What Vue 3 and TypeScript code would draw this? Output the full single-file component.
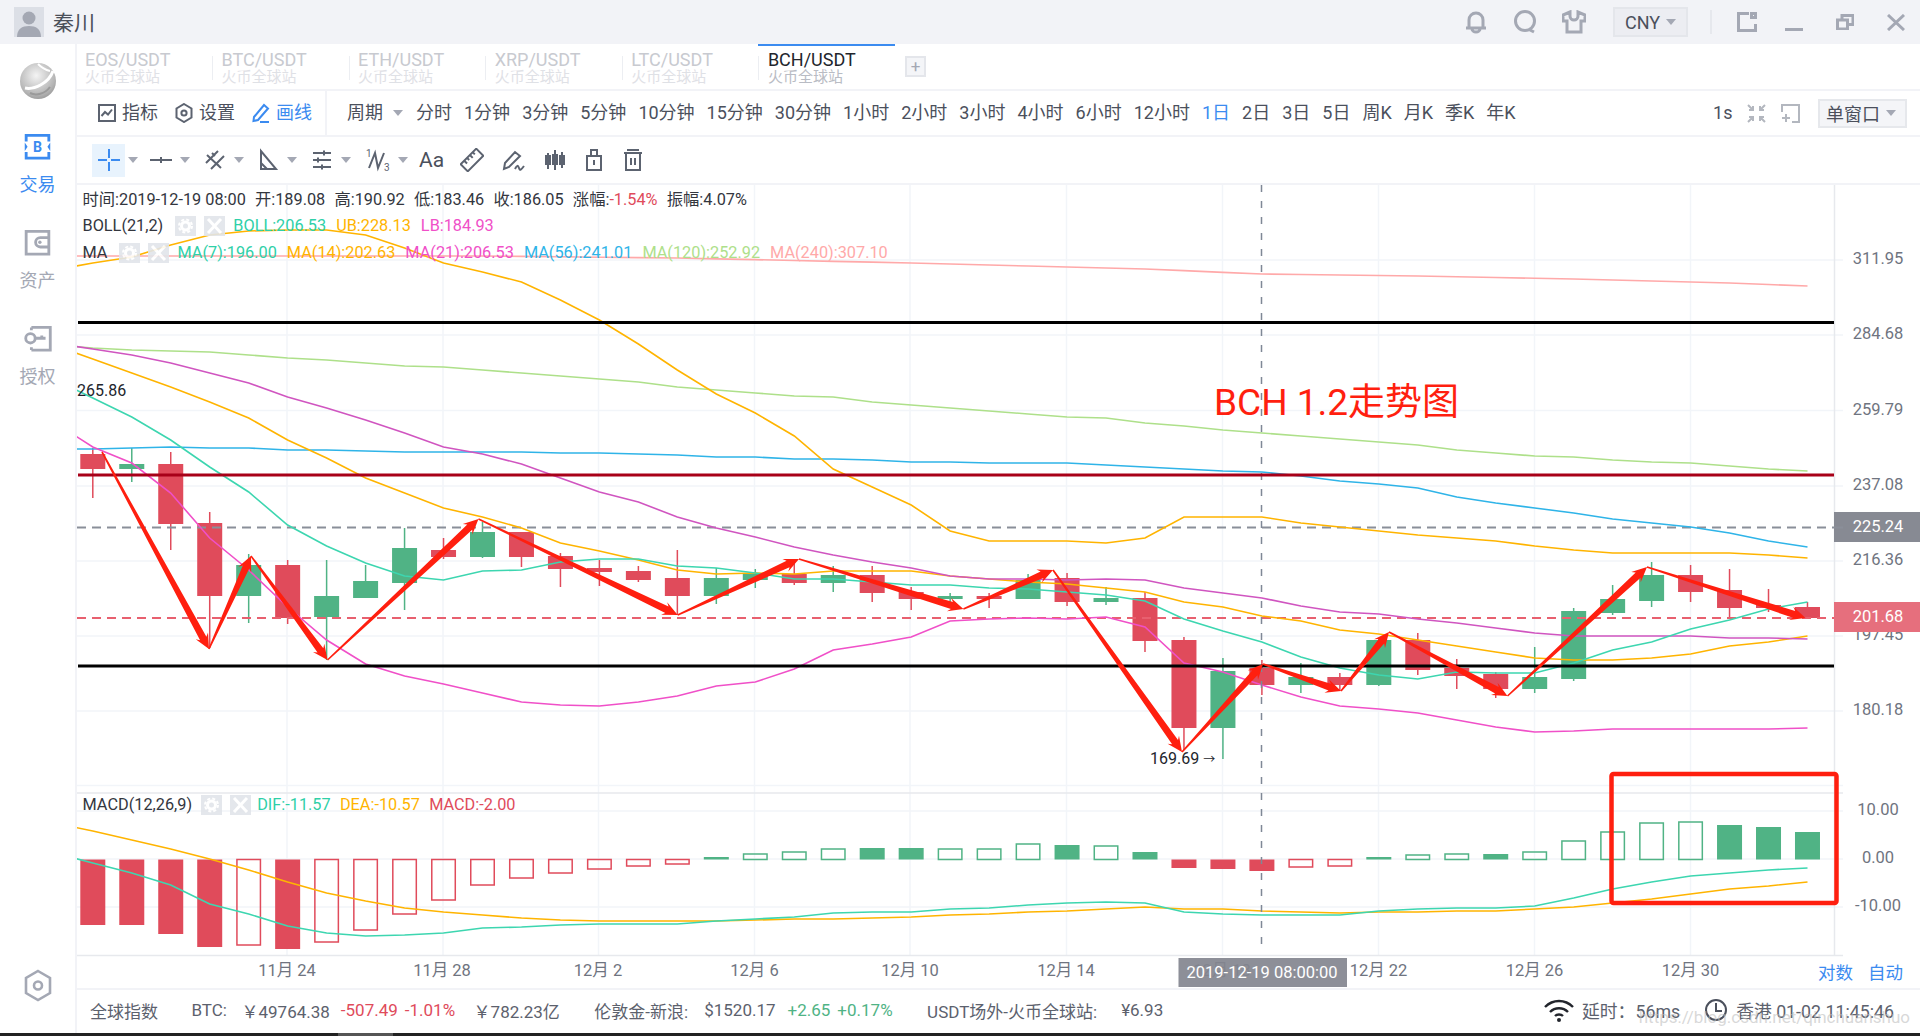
<template>
  <div class="app">
    <div class="titlebar">
      <div class="avatar">
        <svg viewBox="0 0 30 30" width="30" height="30">
          <circle cx="15" cy="11" r="6.5" fill="#a4a8b3" />
          <path d="M3 30c0-8 5-11 12-11s12 3 12 11z" fill="#a4a8b3" />
        </svg>
      </div>
      <span class="username">秦川</span>
      <div class="win-tools">
        <svg class="hi" viewBox="0 0 24 24" width="24" height="24"><path d="M5 18V10a7 7 0 0 1 14 0v8M2 18h20M8 19a4 3 0 0 0 8 0" /></svg>
        <svg class="hi" viewBox="0 0 24 24" width="24" height="24"><circle cx="12" cy="11" r="9.5" /><path d="M17 20l4 2" /></svg>
        <svg class="hi" viewBox="0 0 24 24" width="24" height="24"><path d="M8 2L1 5v6h4v11h14V11h4V5l-7-3v4a4 4 0 0 1-8 0z" /></svg>
        <div class="cny">CNY<i class="caret"></i></div>
        <div class="vsep"></div>
        <svg class="hi panel" viewBox="0 0 20 20" width="20" height="20"><path d="M12 1.500H1.500v17h17V12" /><rect x="14.500" y="1.500" width="4" height="4" /></svg>
        <svg class="hi min" viewBox="0 0 18 20" width="18" height="20"><path d="M0 17.500h18" /></svg>
        <svg class="hi res" viewBox="0 0 18 16" width="18" height="16"><rect x="1.500" y="6" width="10" height="9" /><path d="M6 5V1.500h11v9h-4" /></svg>
        <svg class="hi res" viewBox="0 0 18 17" width="18" height="17"><path d="M1 1l16 15M17 1L1 16" /></svg>
      </div>
    </div>

    <div class="body">
      <aside class="sidebar">
        <svg class="logo" viewBox="0 0 36 36" width="36" height="36">
          <defs>
            <radialGradient id="sphere" cx="0.45" cy="0.35" r="0.75">
              <stop offset="0" stop-color="#f4f4f4" />
              <stop offset="0.7" stop-color="#b5b5b5" />
              <stop offset="1" stop-color="#8d8d8d" />
            </radialGradient>
          </defs>
          <ellipse cx="18" cy="18" rx="18" ry="18" fill="url(#sphere)" />
          <path d="M5 25C14 27 29 20 33 8" fill="none" stroke="#fff" stroke-width="3" />
          <path d="M18 1c3 3 8 6 12 7" fill="none" stroke="#fff" stroke-width="2" />
          <path d="M10 30c6 3 15 1 20-6" fill="none" stroke="#9a9a9a" stroke-width="2" />
        </svg>
        <div class="side-item active">
          <svg viewBox="0 0 27 27" width="27" height="27">
            <path d="M1.500 8V1.500h24V8M25.500 19v6.500h-24V19" fill="none" stroke="#3b8bf0" stroke-width="3" />
            <path d="M0 9l3 4.500L0 18zM27 9l-3 4.500 3 4.500z" fill="#3b8bf0" />
            <text x="13.500" y="19" class="b-letter">B</text>
          </svg>
          <span>交易</span>
        </div>
        <div class="side-item">
          <svg viewBox="0 0 27 27" width="27" height="27">
            <path d="M1.500 1.500h24v24h-24zM25.500 8h-9a5 5 0 0 0 0 10h9" fill="none" stroke="#a4a8b4" stroke-width="3" />
            <circle cx="16" cy="13" r="1.800" fill="#a4a8b4" />
          </svg>
          <span>资产</span>
        </div>
        <div class="side-item">
          <svg viewBox="0 0 30 27" width="30" height="27">
            <path d="M8 1.500h20v24H8M8 1.500v3M8 22.500v3" fill="none" stroke="#a4a8b4" stroke-width="3" />
            <circle cx="7" cy="13" r="5" fill="#fff" stroke="#a4a8b4" stroke-width="3" />
            <path d="M12 13h11M19 10v3" fill="none" stroke="#a4a8b4" stroke-width="3" />
          </svg>
          <span>授权</span>
        </div>
        <svg class="side-gear" viewBox="0 0 28 33" width="28" height="33">
          <path d="M14 2l12 7v15l-12 7-12-7V9z" fill="none" stroke="#a4a8b4" stroke-width="2.600" />
          <circle cx="14" cy="16.500" r="4" fill="none" stroke="#a4a8b4" stroke-width="2.600" />
        </svg>
      </aside>

      <main class="main">
        <div class="tabs">
          <div v-for="t in tabs" :key="t" class="tab" :class="{ on: t === 'BCH/USDT' }">
            <div class="sym">{{ t }}</div>
            <div class="src">火币全球站</div>
          </div>
          <div class="add-tab">+</div>
        </div>

        <div class="bar1">
          <div class="bar1-left">
            <svg class="ti big" viewBox="0 0 18 18" width="18" height="18"><path d="M1 1h16v16H1zM3.500 12l3.500-4 3 2.500 4-5" /></svg>
            <span class="lbl">指标</span>
            <svg class="ti big gap-l" viewBox="0 0 18 20" width="18" height="20"><path d="M9 1l7.500 4.500v9L9 19l-7.500-4.500v-9z" /><circle cx="9" cy="10" r="2.600" /></svg>
            <span class="lbl">设置</span>
            <svg class="ti big gap-l blue" viewBox="0 0 18 20" width="18" height="20"><path d="M2 14L12 2l4 3.500L6 17l-4.500 1zM8 19h9" /></svg>
            <span class="lbl blue-t">画线</span>
          </div>
          <div class="bar1-right">
            <span class="lbl period">周期<i class="caret"></i></span>
            <span v-for="p in periods" :key="p" class="lbl" :class="{ 'blue-t': p === '1日' }">{{ p }}</span>
            <div class="bar1-end">
              <span class="lbl">1s</span>
              <svg class="ti thin" viewBox="0 0 19 19" width="19" height="19"><path d="M1 1l5 5M6 2v4H2M18 1l-5 5M13 2v4h4M1 18l5-5M6 17v-4H2M18 18l-5-5M13 17v-4h4" /></svg>
              <svg class="ti thin" viewBox="0 0 19 19" width="19" height="19"><path d="M1 8V1h17v17h-7M1 14h8M5 10v8" /></svg>
              <div class="single">单窗口<i class="caret"></i></div>
            </div>
          </div>
        </div>

        <div class="bar2">
          <span class="tool-sel">
            <svg class="ti2" viewBox="0 0 24 24" width="24" height="24"><path d="M12 1v9M12 14v9M1 12h9M14 12h9" stroke="#3b8bf0" /></svg>
          </span>
          <i class="caret c2"></i>
          <svg class="ti2" viewBox="0 0 24 24" width="24" height="24"><path d="M1 12h22M12 9v6" /></svg>
          <i class="caret c2"></i>
          <svg class="ti2" viewBox="0 0 24 24" width="24" height="24"><path d="M3 15L15 3M8 21L21 8M4 7l14 13M9 5l3 3M13 15l3 3" /></svg>
          <i class="caret c2"></i>
          <svg class="ti2" viewBox="0 0 24 24" width="24" height="24"><path d="M5 3v18h15zM5 15l6 6" /></svg>
          <i class="caret c2"></i>
          <svg class="ti2" viewBox="0 0 24 24" width="24" height="24"><path d="M3 5h18M3 12h18M3 19h18M14 2.500v5M8 9.500v5M12 16.500v5" /></svg>
          <i class="caret c2"></i>
          <svg class="ti2 wave" viewBox="0 0 26 24" width="26" height="24"><path d="M4 20L10 5l3 15 6-15" /><text x="1" y="9" class="mini">1</text><text x="19" y="23" class="mini">3</text></svg>
          <i class="caret c2"></i>
          <span class="aa">Aa</span>
          <svg class="ti2 mg" viewBox="0 0 24 24" width="24" height="24"><g transform="rotate(-45 12 12)"><rect x="1" y="7" width="22" height="10" /><path d="M6 7v4M10 7v3M14 7v4M18 7v3" /></g></svg>
          <svg class="ti2 mg pen" viewBox="0 0 24 24" width="24" height="24"><path d="M3 21l1-6L14 4l5 4L8 19zM14 21c2-4 3-4 4-1s2 2 5-2" /></svg>
          <svg class="ti2 mg cd" viewBox="0 0 24 24" width="24" height="24"><path d="M5 5v16M12 2v20M19 4v16" /><rect x="3" y="8" width="4" height="8" /><rect x="10" y="7" width="4" height="9" /><rect x="17" y="8" width="4" height="8" /></svg>
          <svg class="ti2 mg" viewBox="0 0 24 24" width="24" height="24"><path d="M5 8h14v14H5zM9 8V2h6v6M12 12v5" /></svg>
          <svg class="ti2 mg" viewBox="0 0 24 24" width="24" height="24"><path d="M3 5h18M6 2h12M5 5v17h14V5M10 10v7M14 10v7" /></svg>
        </div>

        <div class="chart">
          <svg class="plot" viewBox="76 185 1844 803" width="1844" height="803">
            <!-- grid -->
            <line v-for="y in gridY" :key="'h' + y" x1="76" x2="1842" :y1="y" :y2="y" class="grid" />
            <line v-for="x in gridX" :key="'v' + x" :x1="x" :x2="x" y1="185" y2="955" class="grid" />
            <line x1="76" x2="1842" y1="793" y2="793" class="pane-line" />
            <line x1="76" x2="1842" y1="955.500" y2="955.500" class="pane-line" />
            <line x1="1833.500" x2="1833.500" y1="185" y2="955" class="pane-line" />

            <!-- candles -->
            <g v-for="c in candles" :key="c.x">
              <line :x1="c.x" :x2="c.x" :y1="c.hi" :y2="c.lo" :stroke="c.color" stroke-width="1.500" />
              <rect :x="c.x - 12.500" :y="c.top" width="25" :height="c.h" :fill="c.color" />
            </g>

            <!-- macd histogram -->
            <rect
              v-for="b in bars"
              :key="'m' + b.x"
              :x="b.filled ? b.x - 12.500 : b.x - 11.750"
              :y="b.y"
              :width="b.filled ? 25 : 23.500"
              :height="b.h"
              :fill="b.filled ? b.color : 'none'"
              :stroke="b.filled ? 'none' : b.color"
              stroke-width="1.500"
            />

            <line x1="76" x2="1842" y1="527.500" y2="527.500" class="dash-gray" />
            <line x1="76" x2="1842" y1="618" y2="618" class="dash-red" />

            <!-- indicator lines -->
            <polyline v-for="l in lines" :key="l.color + l.pts.slice(0, 12)" :points="l.pts" fill="none" :stroke="l.color" stroke-width="1.600" />

            <line x1="1260.500" x2="1260.500" y1="185" y2="948" class="dash-cross" />

            <!-- hand drawn levels -->
            <line x1="77" x2="1833" y1="322.500" y2="322.500" stroke="#000" stroke-width="3" />
            <line x1="77" x2="1833" y1="475" y2="475" stroke="#a80018" stroke-width="3" />
            <line x1="77" x2="1833" y1="666" y2="666" stroke="#000" stroke-width="3" />

            <polygon v-for="a in arrows" :key="a" :points="a" fill="#ff1f0f" />
            <rect x="1610.500" y="774" width="225" height="129" rx="2" fill="none" stroke="#ff1f0f" stroke-width="4.500" />

            <text x="1213" y="415" class="note">BCH 1.2走势图</text>
            <text x="76" y="396" class="mark">265.86</text>
            <text x="1149" y="764" class="mark">169.69 <tspan class="arr">→</tspan></text>

            <text v-for="p in priceLabels" :key="p.t" x="1877" :y="p.y" class="axis-y">{{ p.t }}</text>

            <rect x="1833" y="512" width="87" height="30" fill="#878a93" />
            <text x="1877" y="532" class="axis-y on">225.24</text>
            <line x1="1833" x2="1842" y1="527.500" y2="527.500" class="dash-gray" />
            <rect x="1833" y="602" width="87" height="30" fill="#e66f7d" />
            <text x="1877" y="622" class="axis-y on">201.68</text>

            <text v-for="d in dates" :key="d.t" :x="d.x" y="976" class="axis-x">{{ d.t }}</text>
            <rect x="1177.500" y="958" width="168.500" height="29" fill="#83868f" fill-opacity="0.92" />
            <text x="1261" y="978" class="axis-x on">2019-12-19 08:00:00</text>
          </svg>

          <div class="legend l1">
            <span>时间:2019-12-19 08:00</span><span>开:189.08</span><span>高:190.92</span><span>低:183.46</span><span>收:186.05</span>
            <span>涨幅:<b class="c-red">-1.54%</b></span><span>振幅:4.07%</span>
          </div>
          <div class="legend l2">
            <span>BOLL(21,2)</span>
            <span class="mini-btns">
              <svg class="mbtn" viewBox="0 0 21 20"><circle cx="10.500" cy="10" r="4" /><circle class="teeth" cx="10.500" cy="10" r="6.500" /></svg>
              <svg class="mbtn" viewBox="0 0 21 20"><path d="M4 3l13 14M17 3L4 17" /></svg>
            </span>
            <span class="c-teal">BOLL:206.53</span><span class="c-orange">UB:228.13</span><span class="c-mag">LB:184.93</span>
          </div>
          <div class="legend l3">
            <span>MA</span>
            <span class="mini-btns">
              <svg class="mbtn" viewBox="0 0 21 20"><circle cx="10.500" cy="10" r="4" /><circle class="teeth" cx="10.500" cy="10" r="6.500" /></svg>
              <svg class="mbtn" viewBox="0 0 21 20"><path d="M4 3l13 14M17 3L4 17" /></svg>
            </span>
            <span class="c-teal">MA(7):196.00</span><span class="c-orange">MA(14):202.63</span><span class="c-mag">MA(21):206.53</span>
            <span class="c-blue">MA(56):241.01</span><span class="c-lime">MA(120):252.92</span><span class="c-pink">MA(240):307.10</span>
          </div>
          <div class="legend l4">
            <span>MACD(12,26,9)</span>
            <span class="mini-btns">
              <svg class="mbtn" viewBox="0 0 21 20"><circle cx="10.500" cy="10" r="4" /><circle class="teeth" cx="10.500" cy="10" r="6.500" /></svg>
              <svg class="mbtn" viewBox="0 0 21 20"><path d="M4 3l13 14M17 3L4 17" /></svg>
            </span>
            <span class="c-teal">DIF:-11.57</span><span class="c-orange">DEA:-10.57</span><span class="c-red">MACD:-2.00</span>
          </div>
          <div class="scale-links"><span>对数</span><span>自动</span></div>
        </div>

        <div class="status">
          <span class="st-title">全球指数</span>
          <span class="st-a">BTC:</span>
          <span class="st-b gap-a">￥49764.38</span>
          <span class="st-b c-down">-507.49</span>
          <span class="st-b gap-b c-down">-1.01%</span>
          <span class="st-b">￥782.23亿</span>
          <span class="st-a st-g lon">伦敦金-新浪:</span>
          <span class="st-b gap-c">$1520.17</span>
          <span class="st-b c-up">+2.65</span>
          <span class="st-b c-up">+0.17%</span>
          <span class="st-a st-g otc">USDT场外-火币全球站:</span>
          <span class="st-b">¥6.93</span>
          <div class="st-right">
            <svg viewBox="0 0 30 24" width="30" height="24" class="wifi">
              <path d="M1 9c8-8 20-8 28 0M6 14c5-5 13-5 18 0M11 18c2-2 6-2 8 0" />
              <circle cx="15" cy="22" r="2" />
            </svg>
            <span>延时：56ms</span>
            <svg viewBox="0 0 24 24" width="24" height="24" class="clock"><circle cx="12" cy="12" r="10" /><path d="M12 5v8h6" /></svg>
            <span>香港 01-02 11:45:46</span>
            <span class="watermark">https://blog.csdn.net/qinchuanshuo</span>
          </div>
        </div>
      </main>
    </div>
    <div class="strip"><i></i></div>
  </div>
</template>

<script setup lang="ts">
const tabs = ['EOS/USDT', 'BTC/USDT', 'ETH/USDT', 'XRP/USDT', 'LTC/USDT', 'BCH/USDT']
const periods = ['分时', '1分钟', '3分钟', '5分钟', '10分钟', '15分钟', '30分钟', '1小时', '2小时', '3小时', '4小时', '6小时', '12小时', '1日', '2日', '3日', '5日', '周K', '月K', '季K', '年K']

const RED = '#e04b5b'
const GREEN = '#50b385'
const X = (i: number) => 91.8 + 38.97 * i

const gridY = [260, 335, 410.5, 486, 561, 636, 711, 785.5, 811, 859, 907]
const gridX = [286, 442, 597.5, 753.5, 909, 1065.5, 1221.5, 1377.5, 1533.5, 1689.5]

// wick top, wick bottom, body top, body bottom, 1 = rising
const rawCandles: [number, number, number, number, number][] = [
  [448, 498, 454, 469, 0], [448, 482, 464, 469, 1], [452, 550, 464, 524, 0], [512, 648, 523, 596, 0],
  [554, 623, 565, 596, 1], [560, 624, 565, 618, 0], [560, 660, 596, 617, 1], [565, 598, 581, 598, 1],
  [528, 610, 548, 583, 1], [538, 559, 550, 557, 0], [522, 558, 532, 557, 1], [532, 567, 532, 557, 0],
  [553, 587, 556, 569, 0], [560, 586, 568, 572, 0], [566, 582, 571, 580, 0], [550, 615, 578, 596, 0],
  [568, 604, 578, 596, 1], [569, 588, 573, 580, 1], [560, 585, 574, 583, 0], [566, 592, 575, 583, 1],
  [566, 602, 575, 593, 0], [587, 610, 592, 599, 0], [593, 607, 596, 599, 1], [593, 608, 596, 599, 0],
  [574, 599, 580, 599, 1], [573, 606, 578, 602, 0], [587, 605, 598, 602, 1], [592, 652, 598, 641, 0],
  [637, 750, 640, 728, 0], [658, 759, 671, 728, 1], [660, 695, 668, 685, 0], [663, 693, 677, 685, 1],
  [673, 691, 677, 685, 0], [638, 686, 640, 685, 1], [633, 675, 640, 670, 0], [659, 689, 668, 676, 0],
  [672, 698, 674, 689, 0], [647, 693, 677, 689, 1], [608, 681, 611, 679, 1], [585, 615, 599, 613, 1],
  [562, 607, 575, 601, 1], [565, 602, 575, 592, 0], [569, 618, 590, 608, 0], [589, 612, 605, 608, 0],
  [602, 618, 607, 618, 0]
]
const candles = rawCandles.map((c, i) => ({
  x: X(i), hi: c[0], lo: c[1], top: c[2], h: c[3] - c[2], color: c[4] ? GREEN : RED
}))

// macd bar far end, filled?
const rawBars: [number, number][] = [
  [925, 1], [925, 1], [934, 1], [947, 1], [945, 0], [949, 1], [942, 0], [930, 0], [914, 0], [900, 0], [885, 0],
  [878, 0], [873, 0], [869, 0], [866, 0], [864, 0], [857, 1], [854, 0], [852, 0], [849, 0], [848, 1], [848, 1],
  [849, 0], [849, 0], [844, 0], [845, 1], [846, 0], [852, 1], [868, 1], [869, 1], [871, 1], [867, 0], [866, 0],
  [857, 1], [855, 0], [854, 0], [854, 1], [852, 0], [841, 0], [832, 0], [823, 0], [822, 0], [825, 1], [827, 1], [832, 1]
]
const ZERO = 859.5
const bars = rawBars.map((b, i) => ({
  x: X(i),
  y: Math.min(b[0], ZERO),
  h: Math.abs(b[0] - ZERO),
  color: b[0] < ZERO ? GREEN : RED,
  filled: b[1] === 1
}))

const toPoints = (ys: number[]) => ys.map((y, i) => `${X(i - 1).toFixed(1)},${y}`).join(' ')

// pink line barely moves, so only its bends are listed
const ma240Knots: [number, number][] = [[-1, 256], [10, 256], [15, 258], [21, 263], [27, 269], [30, 274], [34, 276], [38, 279], [42, 283], [44, 286]]
const ma240: number[] = []
for (let i = -1; i <= 44; i++) {
  const k = ma240Knots.findIndex(p => p[0] >= i)
  if (k <= 0) {
    ma240.push(ma240Knots[0][1])
  } else {
    const [a, ya] = ma240Knots[k - 1]
    const [b, yb] = ma240Knots[k]
    ma240.push(ya + ((yb - ya) * (i - a)) / (b - a))
  }
}

const lines = [
  { color: '#aee08a', pts: toPoints([345, 348, 350, 351, 352, 355, 358, 360, 363, 366, 367, 370, 373, 376, 379, 382, 387, 390, 393, 396, 397, 402, 405, 408, 411, 414, 417, 418, 423, 426, 430, 433, 436, 439, 442, 445, 450, 453, 456, 457, 460, 462, 463, 466, 469, 471]) },
  { color: '#ffa9a9', pts: toPoints(ma240) },
  { color: '#2fb4e8', pts: toPoints([449, 449, 448, 447, 448, 448, 450, 450, 451, 452, 452, 452, 452, 453, 453, 454, 455, 457, 457, 459, 459, 460, 462, 462, 463, 463, 463, 465, 467, 469, 471, 472, 476, 481, 484, 488, 497, 503, 508, 513, 519, 523, 527, 533, 541, 547]) },
  { color: '#ffb400', pts: toPoints([270, 263, 257, 245, 235, 231, 230, 230, 235, 248, 263, 272, 282, 300, 320, 344, 370, 394, 413, 436, 469, 487, 505, 531, 541, 541, 541, 543, 538, 517, 517, 517, 523, 527, 531, 535, 538, 541, 546, 550, 553, 553, 553, 553, 555, 558]) },
  { color: '#ffb400', pts: toPoints([345, 359, 373, 387, 402, 418, 440, 458, 478, 493, 508, 517, 528, 543, 551, 560, 570, 574, 573, 574, 571, 571, 571, 576, 579, 582, 584, 588, 592, 602, 607, 616, 621, 630, 634, 640, 646, 652, 658, 660, 660, 658, 654, 646, 642, 636]) },
  { color: '#d055c0', pts: toPoints([343, 349, 355, 363, 373, 383, 397, 408, 420, 433, 447, 454, 464, 478, 492, 502, 517, 528, 537, 547, 555, 562, 568, 576, 579, 579, 580, 579, 580, 588, 593, 598, 606, 612, 614, 619, 623, 628, 633, 636, 636, 636, 636, 638, 638, 639]) },
  { color: '#f050c8', pts: toPoints([422, 447, 463, 493, 538, 570, 607, 640, 664, 676, 684, 693, 702, 705, 706, 702, 696, 686, 682, 669, 650, 644, 637, 621, 619, 618, 619, 617, 627, 663, 672, 685, 697, 706, 709, 713, 720, 727, 732, 731, 729, 729, 729, 729, 729, 728]) },
  { color: '#3dd6b0', pts: toPoints([379, 398, 417, 440, 467, 492, 525, 546, 563, 576, 580, 571, 570, 562, 559, 559, 566, 568, 573, 579, 579, 582, 585, 585, 588, 589, 592, 595, 601, 619, 631, 642, 657, 668, 675, 679, 672, 673, 673, 663, 650, 642, 629, 620, 609, 602]) },
  { color: '#ffb400', pts: toPoints([823, 831, 840, 849, 859, 870, 882, 893, 901, 908, 912, 915, 918, 920, 921, 921, 921, 921, 920, 919, 919, 918, 917, 915, 914, 912, 911, 909, 907, 909, 909, 911, 912, 913, 912, 912, 911, 911, 909, 907, 903, 899, 894, 889, 886, 882]) },
  { color: '#3dd6b0', pts: toPoints([853, 863, 873, 885, 904, 914, 926, 933, 936, 935, 933, 928, 927, 925, 924, 924, 924, 921, 919, 917, 913, 912, 912, 909, 908, 905, 903, 902, 903, 912, 914, 915, 915, 915, 911, 909, 908, 908, 906, 898, 889, 882, 876, 873, 870, 868]) }
]

// a hand drawn arrow: hair thin at the tail, thick just behind the head
function arrow(x1: number, y1: number, x2: number, y2: number): string {
  const len = Math.hypot(x2 - x1, y2 - y1)
  const ux = (x2 - x1) / len
  const uy = (y2 - y1) / len
  const at = (back: number, side: number) => `${(x2 - ux * back - uy * side).toFixed(1)},${(y2 - uy * back + ux * side).toFixed(1)}`
  return [
    at(len, -0.8), at(12, -3.6), at(15, -7), at(0, 0), at(15, 7), at(12, 3.6), at(len, 0.8)
  ].join(' ')
}

const route: [number, number][] = [
  [101, 452], [208, 649], [250, 556], [326.5, 660], [477.5, 519], [676.7, 615], [798, 559], [962.4, 609],
  [1052, 570], [1181, 752], [1262, 664], [1340, 691], [1388, 632], [1506.5, 696], [1646, 567], [1804.5, 618]
]
const arrows = route.slice(1).map((p, i) => arrow(route[i][0], route[i][1], p[0], p[1]))

const priceLabels = [
  { t: '311.95', y: 264 }, { t: '284.68', y: 339 }, { t: '259.79', y: 415 }, { t: '237.08', y: 490 },
  { t: '216.36', y: 565 }, { t: '197.45', y: 640 }, { t: '180.18', y: 715 },
  { t: '10.00', y: 815 }, { t: '0.00', y: 863 }, { t: '-10.00', y: 911 }
]

const dates = [
  { t: '11月 24', x: 286 }, { t: '11月 28', x: 441 }, { t: '12月 2', x: 597 }, { t: '12月 6', x: 753.5 },
  { t: '12月 10', x: 909 }, { t: '12月 14', x: 1065 }, { t: '12月 18', x: 1221 }, { t: '12月 22', x: 1377.5 },
  { t: '12月 26', x: 1533.5 }, { t: '12月 30', x: 1689.5 }
]
</script>

<style>
html, body { margin: 0; background: #fff; overflow: hidden; }
</style>

<style scoped>
.app {
  width: 1920px;
  height: 1036px;
  display: flex;
  flex-direction: column;
  overflow: hidden;
  font-family: Roboto, "Noto Sans CJK SC", sans-serif;
  color: #4b505c;
  background: #fff;
}
.titlebar {
  height: 44px;
  flex: none;
  background: #f2f3f7;
  display: flex;
  align-items: center;
  padding: 0 15px 0 14px;
}
.avatar { width: 30px; height: 30px; background: #dcdfe6; overflow: hidden; }
.avatar svg { display: block; }
.username { margin-left: 9px; margin-bottom: 2px; font-size: 21px; color: #4a4f5a; }
.win-tools { margin-left: auto; display: flex; align-items: center; gap: 25px; }
.hi { fill: none; stroke: #a4a8b4; stroke-width: 3; display: block; }
.cny {
  margin-left: 2px;
  width: 75px;
  height: 30px;
  box-sizing: border-box;
  background: #ecedf2;
  border: 2px solid #e4e6eb;
  display: flex;
  align-items: center;
  justify-content: center;
  gap: 6px;
  font-size: 18px;
}
.vsep { width: 2px; height: 24px; background: #e6e8ed; margin-left: -3px; margin-right: 0; }
.min { margin-left: 3px; }
.res { margin-left: 8px; }
.caret {
  display: inline-block;
  width: 0;
  height: 0;
  border-left: 5px solid transparent;
  border-right: 5px solid transparent;
  border-top: 6px solid #a4a8b4;
}

.body { flex: 1; display: flex; min-height: 0; }
.sidebar {
  width: 75px;
  flex: none;
  display: flex;
  flex-direction: column;
  align-items: center;
  border-right: 2px solid #f2f3f7;
  padding-top: 19px;
  box-sizing: content-box;
  color: #a4a8b4;
}
.logo { display: block; margin-top: 0; }
.side-item { display: flex; flex-direction: column; align-items: center; margin-top: 35px; font-size: 18px; height: 63px; }
.side-item + .side-item { margin-top: 33px; }
.side-item span { margin-top: 13.500px; line-height: 24px; }
.side-item svg { display: block; }
.side-item.active { color: #3b8bf0; }
.b-letter { font: 700 15px Roboto, sans-serif; fill: #3b8bf0; text-anchor: middle; }
.side-gear { margin-top: auto; margin-bottom: 31px; }

.main { flex: 1; min-width: 0; display: flex; flex-direction: column; }
.tabs { height: 45px; flex: none; display: flex; border-bottom: 2px solid #f2f3f7; }
.tab {
  width: 136.600px;
  flex: none;
  box-sizing: border-box;
  padding: 7px 0 0 9.500px;
  position: relative;
  color: #c8cad0;
}
.tab:first-child { width: 135px; padding-left: 8px; }
.tab + .tab::before {
  content: "";
  position: absolute;
  left: 0;
  top: 12px;
  height: 24px;
  width: 1px;
  background: #eceef2;
}
.tab.on { color: #22252c; }
.tab.on::after {
  content: "";
  position: absolute;
  left: 0;
  right: 0;
  top: 0;
  height: 2px;
  background: #3b8bf0;
}
.sym { font-size: 18px; line-height: 18px; }
.src { font-size: 15px; line-height: 16px; color: #dfe1e6; }
.tab.on .src { color: #b9bcc4; }
.add-tab {
  width: 21px;
  height: 21px;
  box-sizing: border-box;
  margin: 12px 0 0 10px;
  background: #f4f5f8;
  border: 2px solid #e4e6eb;
  color: #a4a8b4;
  font-size: 17px;
  line-height: 16px;
  text-align: center;
}

.bar1 { height: 44px; flex: none; display: flex; border-bottom: 2px solid #f2f3f7; }
.bar1-left {
  width: 250px;
  flex: none;
  display: flex;
  align-items: center;
  padding-left: 21px;
  box-sizing: border-box;
  border-right: 2px solid #f2f3f7;
}
.bar1-right { flex: 1; display: flex; align-items: center; gap: 12px; padding-left: 20px; }
.lbl { font-size: 18px; line-height: 24px; white-space: nowrap; }
.big { margin-right: 6px; }
.gap-l { margin-left: 17px; }
.blue { stroke: #3b8bf0 !important; }
.blue-t { color: #3b8bf0; }
.ti { fill: none; stroke: #5c6370; stroke-width: 2; display: block; flex: none; }
.ti.thin { stroke: #b3b7bf; stroke-width: 2; }
.period { display: flex; align-items: center; gap: 10px; margin-right: 1px; }
.bar1-end { margin-left: auto; display: flex; align-items: center; gap: 14.500px; padding-right: 13px; }
.single {
  width: 89px;
  height: 29px;
  box-sizing: border-box;
  background: #f4f5f8;
  border: 2px solid #e6e8ec;
  margin-left: 4px;
  display: flex;
  align-items: center;
  padding-left: 6px;
  gap: 6px;
  font-size: 18px;
}

.bar2 { height: 46px; flex: none; display: flex; align-items: center; padding-left: 15px; border-bottom: 2px solid #f2f3f7; }
.tool-sel {
  width: 33px;
  height: 33px;
  background: #e8f3fd;
  display: flex;
  align-items: center;
  justify-content: center;
  flex: none;
  margin-right: 2px;
}
.ti2 { fill: none; stroke: #5c6370; stroke-width: 2; display: block; flex: none; }
.c2 { margin: 0 14px 0 1px; flex: none; }
.bar2 .ti2 + .c2 { margin-left: 7px; margin-right: 12.600px; }
.bar2 .tool-sel + .c2 { margin-left: 1px; margin-right: 11px; }
.wave { margin-left: 2px; }
.mini { font: 10px Roboto, sans-serif; fill: #5c6370; stroke: none; }
.aa { font-size: 21px; color: #4b505c; width: 26px; margin-left: -2px; flex: none; }
.mg { margin-left: 15px; }
.pen { margin-left: 17.500px; }
.cd { margin-left: 17.500px; }

.chart { height: 803px; flex: none; position: relative; }
.plot { display: block; }
.grid { stroke: #f2f5f9; stroke-width: 1.500; }
.pane-line { stroke: #e7e9ed; stroke-width: 1.500; }
.dash-gray { stroke: #8a8f99; stroke-width: 2; stroke-dasharray: 9 6; }
.dash-red { stroke: #e8606f; stroke-width: 2; stroke-dasharray: 9 6; }
.dash-cross { stroke: #7f8896; stroke-width: 1.500; stroke-dasharray: 7 9; }
.note { font-family: Roboto, "Noto Sans CJK SC", sans-serif; font-size: 37px; fill: #ff1f0f; }
.mark { font-size: 16px; fill: #22252c; }
.arr { font-size: 12px; }
.axis-y { font-size: 16.500px; fill: #6f7480; text-anchor: middle; }
.axis-x { font-size: 16.500px; fill: #6f7480; text-anchor: middle; }
.axis-y.on, .axis-x.on { fill: #fff; }

.legend {
  position: absolute;
  left: 5.500px;
  display: flex;
  align-items: center;
  gap: 10px;
  font-size: 16.300px;
  line-height: 20px;
  color: #33363e;
  white-space: nowrap;
}
.legend b { font-weight: 400; }
.l1 { top: 5px; gap: 9.200px; }
.l2 { top: 31px; }
.l3 { top: 58px; }
.l4 { top: 610px; gap: 9.300px; }
.mini-btns { display: flex; gap: 8px; margin-left: 1.500px; margin-right: -1.500px; }
.l4 .mini-btns { margin-left: 0; margin-right: -3.500px; }
.mbtn {
  width: 21px;
  height: 20px;
  display: block;
  background: #e2e5ea;
  fill: none;
  stroke: #fff;
  stroke-width: 3;
  opacity: 0.9;
}
.teeth { stroke-width: 2; stroke-dasharray: 3 2.100; }
.c-red { color: #e04b5b; }
.c-teal { color: #2fd0a8; }
.c-orange { color: #ffb400; }
.c-mag { color: #f050c8; }
.c-blue { color: #2fb4e8; }
.c-lime { color: #aee08a; }
.c-pink { color: #ffa9a9; }
.scale-links {
  position: absolute;
  right: 17px;
  top: 776px;
  display: flex;
  gap: 15px;
  font-size: 17.500px;
  line-height: 24px;
  color: #3b8bf0;
}

.status {
  height: 45px;
  flex: none;
  box-sizing: border-box;
  border-top: 2px solid #f2f3f7;
  display: flex;
  align-items: center;
  padding: 0 0 3px 13px;
  font-size: 17px;
  color: #5c616d;
  position: relative;
}
.st-title { width: 101.500px; flex: none; }
.st-a { margin-right: 14.500px; }
.st-b { margin-right: 7px; }
.gap-a { margin-right: 11px; }
.gap-b { margin-right: 18.500px; }
.gap-c { margin-right: 12px; }
.st-g { margin-left: 27.500px; }
.lon { margin-right: 16px; }
.otc { margin-right: 24px; }
.c-down { color: #e04b5b; }
.c-up { color: #50b385; }
.st-right { margin-left: auto; padding-right: 26px; display: flex; align-items: center; gap: 8px; font-size: 17.800px; }
.wifi { fill: none; stroke: #22252c; stroke-width: 2.400; display: block; }
.wifi circle { fill: #22252c; stroke: none; }
.clock { fill: none; stroke: #4b505c; stroke-width: 2; display: block; margin-left: 16px; }
.watermark {
  position: absolute;
  right: 10px;
  top: 16px;
  font-size: 17px;
  line-height: 22px;
  color: rgba(190, 190, 190, 0.6);
}

.strip { height: 3px; flex: none; background: #222; position: relative; }
.strip i { position: absolute; left: 338px; width: 55px; top: 0; bottom: 0; background: #555; }
</style>
